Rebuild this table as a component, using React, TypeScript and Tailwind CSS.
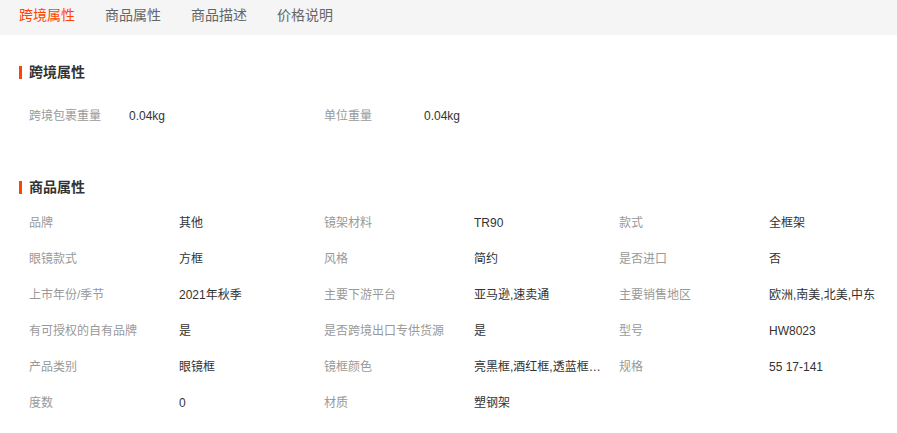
const tabs = ['跨境属性', '商品属性', '商品描述', '价格说明'];

const crossBorder = [
  ['跨境包裹重量', '0.04kg'],
  ['单位重量', '0.04kg'],
];

const attrs = [
  ['品牌', '其他'],
  ['镜架材料', 'TR90'],
  ['款式', '全框架'],
  ['眼镜款式', '方框'],
  ['风格', '简约'],
  ['是否进口', '否'],
  ['上市年份/季节', '2021年秋季'],
  ['主要下游平台', '亚马逊,速卖通'],
  ['主要销售地区', '欧洲,南美,北美,中东'],
  ['有可授权的自有品牌', '是'],
  ['是否跨境出口专供货源', '是'],
  ['型号', 'HW8023'],
  ['产品类别', '眼镜框'],
  ['镜框颜色', '亮黑框,酒红框,透蓝框,透明框,透灰框'],
  ['规格', '55 17-141'],
  ['度数', '0'],
  ['材质', '塑钢架'],
];

function SectionTitle({ children }: { children: React.ReactNode }) {
  return (
    <div className="flex items-center h-5 pl-[19px]">
      <span className="w-[3px] h-[13px] bg-[#ff4400] mr-[7px]" />
      <h3 className="text-[14px] font-bold text-[#333]">{children}</h3>
    </div>
  );
}

export default function App() {
  return (
    <div
      className="w-[897px] h-[433px] bg-white overflow-hidden"
      style={{ fontFamily: '"Liberation Sans", "Noto Sans CJK SC", sans-serif' }}
    >
      <div className="h-[35px] bg-[#f5f5f5] flex items-center gap-[30px] pl-[19px] pb-[5px] text-[14px]">
        {tabs.map((t, i) => (
          <span key={t} className={i === 0 ? 'text-[#ff4400]' : 'text-[#666]'}>
            {t}
          </span>
        ))}
      </div>

      <div className="pt-[27px]">
        <SectionTitle>跨境属性</SectionTitle>
        <div className="flex pl-[29px] mt-[16px] text-[12px]">
          {crossBorder.map(([k, v]) => (
            <div key={k} className="flex items-center h-9 w-[295px]">
              <span className="w-[100px] text-[#999]">{k}</span>
              <span className="w-[195px] text-[#333]">{v}</span>
            </div>
          ))}
        </div>
      </div>

      <div className="pt-[43px]">
        <SectionTitle>商品属性</SectionTitle>
        <div className="grid grid-cols-[295px_295px_295px] pl-[29px] mt-[8px] text-[12px]">
          {attrs.map(([k, v]) => (
            <div key={k} className="flex items-center h-9">
              <span className="w-[150px] shrink-0 text-[#999] whitespace-nowrap">{k}</span>
              <span className="w-[145px] pr-[17px] text-[#333] truncate">{v}</span>
            </div>
          ))}
        </div>
      </div>
    </div>
  );
}
